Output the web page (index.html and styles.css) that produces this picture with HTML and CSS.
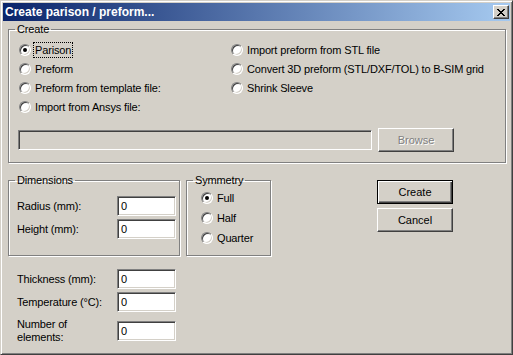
FILE: index.html
```html
<!DOCTYPE html>
<html lang="en">
<head>
    <meta charset="UTF-8">
    <title>Create parison / preform...</title>
    <link rel="stylesheet" href="styles.css">
</head>
<body>
    <div class="window">
        <div class="titlebar">
            <span class="title">Create parison / preform...</span>
            <button class="close" type="button">
                <svg width="8" height="7" viewBox="0 0 8 7">
                    <path d="M0 0h2v1h1v1h2V1h1V0h2v1H7v1H6v1H5v1h1v1h1v1h1v1H6V6H5V5H3v1H2v1H0V6h1V5h1V4h1V3H2V2H1V1H0z" fill="#000"/>
                </svg>
            </button>
        </div>

        <div class="content">
            <fieldset class="group create-group">
                <legend>Create</legend>
                <div class="options">
                    <div class="col">
                        <label class="radio"><span class="dot checked"></span><span class="text focus">Parison</span></label>
                        <label class="radio"><span class="dot"></span><span class="text">Preform</span></label>
                        <label class="radio"><span class="dot"></span><span class="text">Preform from template file:</span></label>
                        <label class="radio"><span class="dot"></span><span class="text">Import from Ansys file:</span></label>
                    </div>
                    <div class="col">
                        <label class="radio"><span class="dot"></span><span class="text">Import preform from STL file</span></label>
                        <label class="radio"><span class="dot"></span><span class="text">Convert 3D preform (STL/DXF/TOL) to B-SIM grid</span></label>
                        <label class="radio"><span class="dot"></span><span class="text">Shrink Sleeve</span></label>
                    </div>
                </div>
                <div class="file-row">
                    <div class="field wide"></div>
                    <button class="btn" type="button" disabled>Browse</button>
                </div>
            </fieldset>

            <div class="lower">
                <div class="left">
                    <div class="groups">
                        <fieldset class="group dims">
                            <legend>Dimensions</legend>
                            <div class="form">
                                <span class="lbl">Radius (mm):</span><div class="field">0</div>
                                <span class="lbl">Height (mm):</span><div class="field">0</div>
                            </div>
                        </fieldset>
                        <fieldset class="group sym">
                            <legend>Symmetry</legend>
                            <div class="sym-list">
                                <label class="radio"><span class="dot checked"></span><span class="text">Full</span></label>
                                <label class="radio"><span class="dot"></span><span class="text">Half</span></label>
                                <label class="radio"><span class="dot"></span><span class="text">Quarter</span></label>
                            </div>
                        </fieldset>
                    </div>
                    <div class="form params">
                        <span class="lbl">Thickness (mm):</span><div class="field">0</div>
                        <span class="lbl">Temperature (°C):</span><div class="field">0</div>
                        <span class="lbl last">Number of<br>elements:</span><div class="field last">0</div>
                    </div>
                </div>
                <div class="actions">
                    <button class="btn default" type="button">Create</button>
                    <button class="btn" type="button">Cancel</button>
                </div>
            </div>
        </div>
    </div>
</body>
</html>
```

FILE: styles.css
```css
body {
    margin: 0;
    font-family: "Liberation Sans", Arial, sans-serif;
    font-size: 11px;
    letter-spacing: -0.15px;
    color: #000;
    background: #d4d0c8;
}
.window {
    width: 513px;
    height: 355px;
    box-sizing: border-box;
    padding: 2px;
    background: #d4d0c8;
    border: 1px solid;
    border-color: #d4d0c8 #404040 #404040 #d4d0c8;
    box-shadow: inset 1px 1px 0 #fff, inset -1px -1px 0 #808080;
}
.titlebar {
    height: 18px;
    display: flex;
    align-items: center;
    padding-left: 2px;
    background: linear-gradient(to right, #0a246a, #a6caf0);
}
.title {
    flex: 1;
    color: #fff;
    font-weight: bold;
    font-size: 12px;
    letter-spacing: 0;
}
.close {
    width: 16px;
    height: 14px;
    margin-right: 1px;
    padding: 0;
    display: flex;
    align-items: center;
    justify-content: center;
    background: #d4d0c8;
    border: 1px solid;
    border-color: #fff #404040 #404040 #fff;
    box-shadow: inset -1px -1px 0 #808080;
}
.content {
    padding: 1px 4px 0 5px;
}

/* group boxes */
.group {
    margin: 0;
    padding: 0;
    border: 1px solid #808080;
    box-shadow: inset 1px 1px 0 #fff, 1px 1px 0 #fff;
}
.group legend {
    margin-left: 6px;
    padding: 0 2px;
    line-height: 14px;
}
.options {
    display: grid;
    grid-template-columns: 212px auto;
    padding: 4px 0 0 10px;
}
.radio {
    display: flex;
    align-items: center;
    height: 19px;
}
.dot {
    width: 10px;
    height: 10px;
    border-radius: 50%;
    border: 1px solid;
    border-color: #808080 #fff #fff #808080;
    box-shadow: inset 1px 1px 0 #404040, inset -1px -1px 0 #d4d0c8;
    background: #fff;
    margin-right: 2px;
    display: flex;
    align-items: center;
    justify-content: center;
}
.dot.checked::after {
    content: "";
    width: 4px;
    height: 4px;
    border-radius: 50%;
    background: #000;
}
.text {
    padding: 1px;
    border: 1px dotted transparent;
    line-height: 12px;
}
.text.focus {
    border-color: #000;
}
.file-row {
    display: flex;
    align-items: center;
    gap: 6px;
    padding: 12px 0 10px 9px;
}
.field {
    width: 59px;
    height: 20px;
    box-sizing: border-box;
    padding-left: 3px;
    line-height: 18px;
    background: #fff;
    border: 1px solid;
    border-color: #808080 #fff #fff #808080;
    box-shadow: inset 1px 1px 0 #404040, inset -1px -1px 0 #d4d0c8;
}
.field.wide {
    width: 354px;
    background: #d4d0c8;
}

/* buttons */
.btn {
    width: 76px;
    height: 24px;
    padding: 0;
    font: inherit;
    color: #000;
    background: #d4d0c8;
    border: 1px solid;
    border-color: #fff #404040 #404040 #fff;
    box-shadow: inset -1px -1px 0 #808080;
}
.btn:disabled {
    color: #808080;
    text-shadow: 1px 1px 0 #fff;
}
.btn.default {
    border-color: #000;
    box-shadow: inset 1px 1px 0 #fff, inset -1px -1px 0 #404040, inset -2px -2px 0 #808080;
}

/* lower area */
.lower {
    display: flex;
    margin-top: 10px;
}
.groups {
    display: grid;
    grid-template-columns: 172px 85px;
    column-gap: 6px;
}
.form {
    display: grid;
    grid-template-columns: 100px 59px;
    row-gap: 3px;
    align-items: center;
}
.dims .form {
    padding: 9px 0 16px 8px;
}
.sym-list {
    padding: 1px 0 0 14px;
}
.sym-list .radio {
    height: 20px;
}
.params {
    padding: 13px 0 0 9px;
}
.params .last {
    margin-top: 3px;
}
.params .lbl.last {
    line-height: 13px;
}
.actions {
    display: flex;
    flex-direction: column;
    gap: 4px;
    margin-left: 106px;
    padding-top: 7px;
}
```
